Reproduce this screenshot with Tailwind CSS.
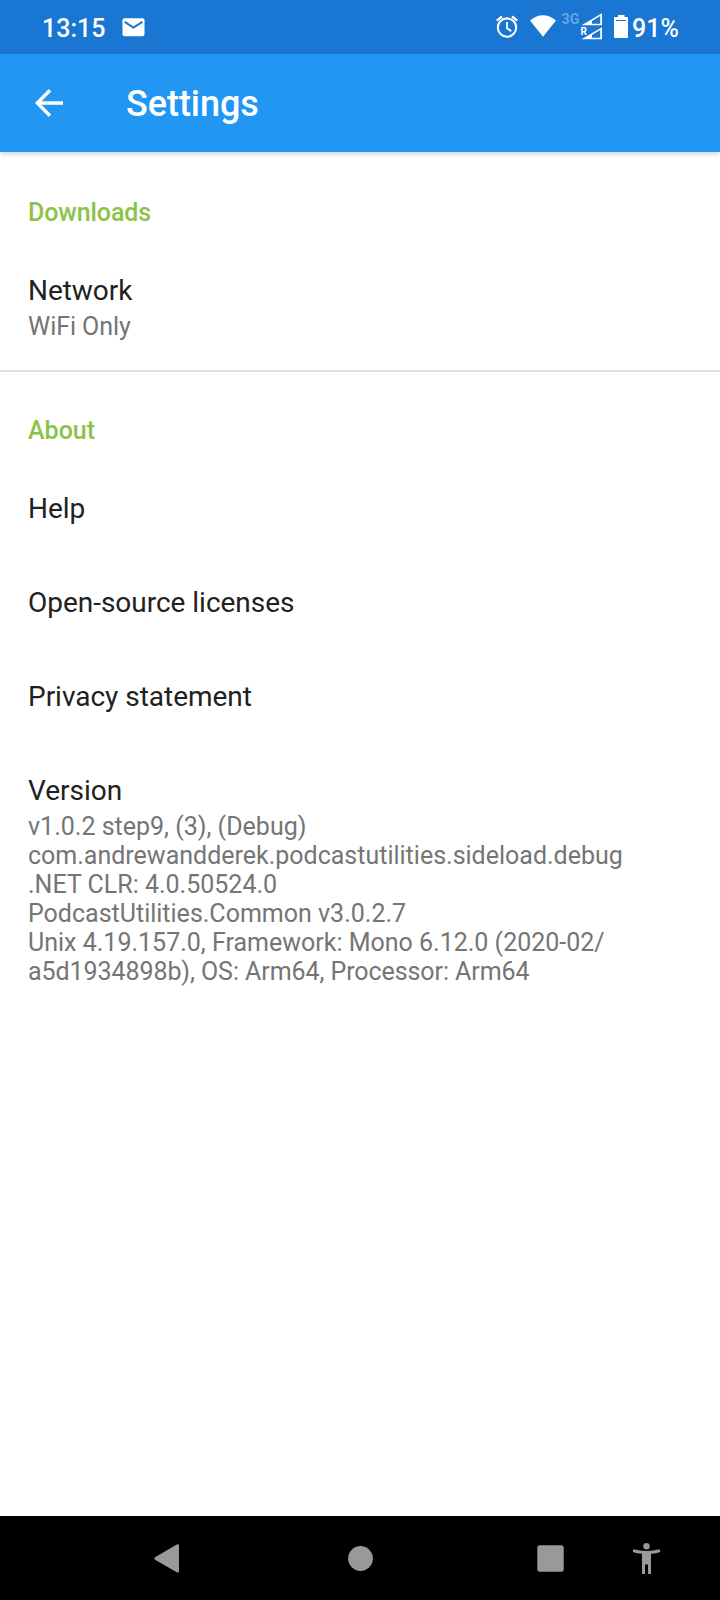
<!DOCTYPE html>
<html lang="en">
<head>
<meta charset="utf-8">
<title>Settings</title>
<script src="https://cdn.jsdelivr.net/npm/@tailwindcss/browser@4"></script>
</head>
<body class="bg-white">
<div class="w-[720px] h-[1600px] flex flex-col overflow-hidden bg-white font-[Roboto,sans-serif] text-[#212121]">
  <!-- Status bar -->
  <header class="h-[54px] shrink-0 bg-[#1976d2] flex items-center text-white font-medium text-[25px] leading-[29px] pl-[42px] pr-[42px]">
    <span class="pt-[3px] w-[80px]">13:15</span>
    <svg class="w-[24px] h-[54px]" viewBox="122 0 24 54" fill="none">
      <rect x="122.5" y="18.2" width="22" height="18" rx="2" fill="#fff"/>
      <path d="M124.6 21.8 133.5 27.6 142.4 21.8" stroke="#1976d2" stroke-width="2"/>
    </svg>
    <div class="flex-1"></div>
    <svg class="w-[140px] h-[54px]" viewBox="492 0 140 54" fill="none">
      <g stroke="#fff">
        <circle cx="507" cy="27.6" r="9.2" stroke-width="2.1"/>
        <path d="M507 22v6.2l4.2 2.9" stroke-width="1.9"/>
        <path d="M496.8 20.6 502 16.3M512 16.3 517.2 20.6" stroke-width="2.3"/>
      </g>
      <path d="M530 20.6Q543 10 556 20.6L543 36.8Z" fill="#fff"/>
      <text x="561.500" y="24" font-size="14.2" font-weight="700" fill="#fff" fill-opacity=".35" font-family="Roboto">3G</text>
      <path fill="#fff" fill-rule="evenodd" d="M581.500 25.200 602 13.200V25.200ZM592 20.900V23.700H600.200V16.100Z"/>
      <path fill="#fff" fill-rule="evenodd" d="M581.500 39.200 602 27.200V39.200ZM592 34.900V37.700H600.200V30.100Z"/>
      <path d="M580 27h7.500v8.500H580z" fill="#1976d2"/>
      <text x="580.500" y="35" font-size="10" font-weight="700" fill="#fff" font-family="Roboto">R</text>
      <path d="M618 15h6.500v2h2.500q1 0 1 1v19q0 1-1 1h-12q-1 0-1-1v-19q0-1 1-1h3z" fill="#fff"/>
      <path d="M616 20.500h10" stroke="#1976d2"/>
    </svg>
    <span class="pt-[3px] w-[46px] whitespace-nowrap">91%</span>
  </header>
  <!-- App bar -->
  <div class="h-[98px] shrink-0 bg-[#2196f3] flex items-center text-white shadow-[0_3px_4px_rgba(0,0,0,0.13)]">
    <svg class="w-[126px] h-[98px]" viewBox="0 54 126 98" fill="none" stroke="#fff" stroke-width="3.400">
      <path d="M63 103H38M50 90.300 37.300 103 50 115.700"/>
    </svg>
    <h1 class="pt-[2px] text-[36px] leading-[42px] tracking-[-0.05px] font-medium">Settings</h1>
  </div>
  <!-- Preferences -->
  <main class="flex-1 flex flex-col">
    <section class="h-[220px] px-7 pt-[46px] border-b-2 border-[#e0e0e0]">
      <h2 class="text-[25px] leading-[29px] tracking-[-0.1px] font-medium text-[#8bc34a]">Downloads</h2>
      <div class="pt-[47px] text-[28px] leading-[33px] tracking-[-0.05px]">Network</div>
      <div class="pt-[5px] text-[25px] leading-[29px] tracking-[-0.05px] text-[#757575]">WiFi Only</div>
    </section>
    <section class="px-7 pt-[44px]">
      <h2 class="text-[25px] leading-[29px] font-medium text-[#8bc34a]">About</h2>
      <div class="pt-[47px] flex flex-col gap-[61px] text-[28px] leading-[33px] tracking-[-0.02px]">
        <div>Help</div>
        <div>Open-source licenses</div>
        <div>Privacy statement</div>
        <div>Version</div>
      </div>
      <div class="pt-[5px] text-[25px] leading-[29px] text-[#757575] whitespace-nowrap">
        v1.0.2 step9, (3), (Debug)<br>com.andrewandderek.podcastutilities.sideload.debug<br>.NET CLR: 4.0.50524.0<br>PodcastUtilities.Common v3.0.2.7<br>Unix 4.19.157.0, Framework: Mono 6.12.0 (2020-02/<br><span class="tracking-[-0.07px]">a5d1934898b), OS: Arm64, Processor: Arm64</span>
      </div>
    </section>
  </main>
  <!-- Navigation bar -->
  <nav class="h-[84px] shrink-0 bg-black">
    <svg class="w-[720px] h-[84px]" viewBox="0 1516 720 84" fill="#999">
      <path d="M155 1557.300 176.800 1544.500Q179 1543.600 179 1546V1571Q179 1573.400 176.800 1572.300L155 1559.700Q153.500 1558.500 155 1557.300Z"/>
      <circle cx="360.500" cy="1558.500" r="12.400"/>
      <rect x="537.300" y="1545.300" width="26.400" height="26.400" rx="2.500"/>
      <circle cx="646.500" cy="1546.200" r="3.200"/>
      <path d="M633.300 1549.300Q646.500 1552.500 659.700 1549.300L660.300 1552Q656 1553.400 651 1553.800V1574H648V1564.500H645V1574H642V1553.800Q637 1553.400 632.700 1552Z"/>
    </svg>
  </nav>
</div>
</body>
</html>
